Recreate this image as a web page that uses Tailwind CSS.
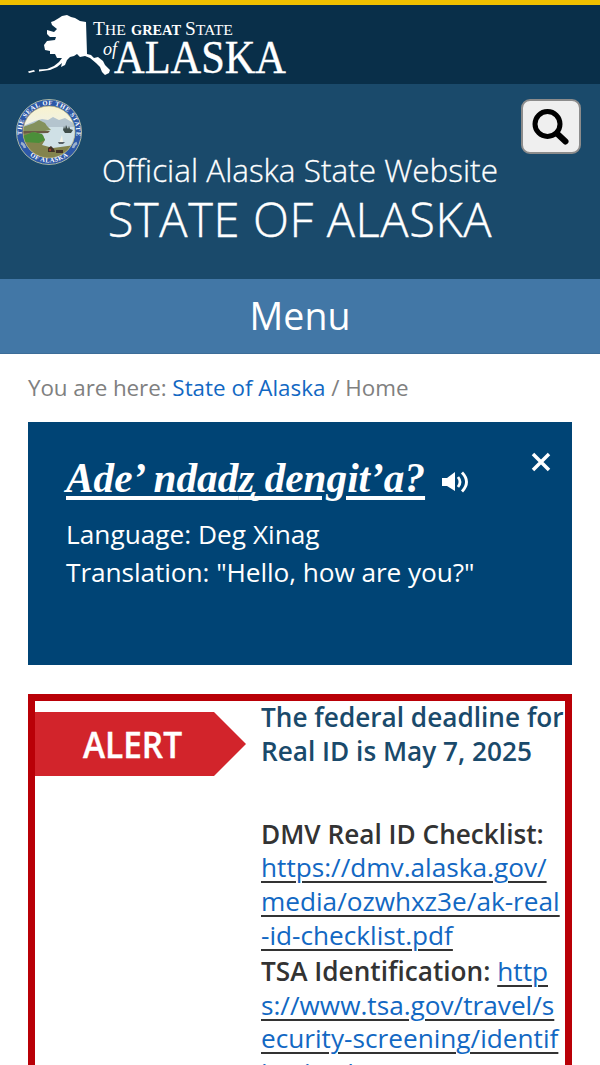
<!DOCTYPE html>
<html lang="en">
<head>
    <meta charset="UTF-8">
    <meta name="viewport" content="width=device-width, initial-scale=1.0">
    <title>State of Alaska</title>
    <script src="https://cdn.jsdelivr.net/npm/@tailwindcss/browser@4"></script>
</head>
<body class="bg-white font-['Open_Sans',sans-serif] h-[1065px] overflow-hidden">

    <!-- top bar -->
    <div class="h-[84px] bg-[#092f49] border-t-[5px] border-[#f0c000]">
        <svg class="block" width="300" height="79" viewBox="0 5 300 79" fill="#fff">
            <path d="M54 21 L59 18 L62 16 L67 15 L71 17 L75 18 L80 21 L86 22 L87 54 L91 55 L94 58 L98 57 L103 61 L105 65 L110 70 L109 73 L105 75 L102 72 L100 67 L96 63 L90 58 L85 56 L80 57 L77 54 L74 56 L70 57 L67 60 L65 65 L61 67 L62 63 L57 67 L50 70 L39 71.500 L39 69.500 L47 69 L54 66 L59 62 L62 58 L57 58 L55 54 L50 54 L50 51 L45 50 L44 45 L47 41 L55 40 L56 37 L50 37 L47 34 L47 30 L54 32 L57 29 L52 25 L51 22 Z"/>
            <path d="M28 71.500 L34 70 L35 71.500 L29 73 Z"/>
            <g font-family="'Liberation Serif', serif">
                <text x="93" y="35" font-size="19" textLength="33" lengthAdjust="spacingAndGlyphs">T<tspan font-size="15.500">HE</tspan></text>
                <text x="131" y="35" font-size="15.500" font-weight="bold" textLength="50" lengthAdjust="spacingAndGlyphs">GREAT</text>
                <text x="185" y="35" font-size="19" textLength="48" lengthAdjust="spacingAndGlyphs">S<tspan font-size="15.500">TATE</tspan></text>
                <text x="103" y="55" font-size="19" font-style="italic" textLength="14" lengthAdjust="spacingAndGlyphs">of</text>
                <text x="114" y="73" font-size="47" stroke="#fff" stroke-width=".4" textLength="172" lengthAdjust="spacingAndGlyphs">ALASKA</text>
            </g>
        </svg>
    </div>

    <!-- header -->
    <header class="relative h-[195px] bg-[#1a4a6b] pt-[70px] text-center text-white font-light">
        <svg class="absolute left-[15px] top-[14px]" width="68" height="68" viewBox="0 0 68 68">
            <defs>
                <clipPath id="inner"><circle cx="34" cy="34" r="26"/></clipPath>
                <linearGradient id="sky" x1="0" y1="0" x2="0" y2="1">
                    <stop offset="0" stop-color="#fbf3c4"/>
                    <stop offset=".5" stop-color="#eef1ee"/>
                </linearGradient>
                <path id="arcTop" d="M7.300 40 A27.300 27.300 0 1 1 60.700 40"/>
                <path id="arcBottom" d="M6 47 A31.300 31.300 0 0 0 62 47"/>
            </defs>
            <circle cx="34" cy="34" r="32.500" fill="#2d58a8" stroke="#a9b7a5" stroke-width="1"/>
            <g clip-path="url(#inner)">
                <rect width="68" height="68" fill="url(#sky)"/>
                <path d="M8 28 L20 23 L27 21 L33 22 L38 19 L44 22 L50 20 L60 26 V32 H8 Z" fill="#b4c4ce"/>
                <path d="M8 29 H60 V52 H8 Z" fill="#cfe0e6"/>
                <path d="M8 29 L19 25 L24 22 L30 25 L32 28 L36 32 L30 33 L8 34 Z" fill="#84915c"/>
                <path d="M8 33 L35 33 L33 35 L8 36 Z" fill="#6a5a46"/>
                <path d="M8 36 L20 34 L28 37 L30 42 L27 47 L38 50 L60 47 V64 H8 Z" fill="#83834d"/>
                <path d="M8 38 L18 34 L27 36 L30 42 L24 45 L9 44 Z" fill="#4b8f3a"/>
                <path d="M48 32 l1-4 1 3 1-4 2 4 1-3 1 3 3 1 -2 3 H50 Z" fill="#3f4d4b"/>
                <path d="M47 37 L44.500 44 H48 Z" fill="#f5f3e8"/>
                <path d="M43 44 H50 L48 46 H44 Z" fill="#596066"/>
                <path d="M33 50 l3-2 3 3 1 3 h-7 Z M41 52 h7 v3 h-7 Z" fill="#413127"/>
                <circle cx="35" cy="52" r="1.200" fill="#a43c29"/>
            </g>
            <circle cx="34" cy="34" r="26" fill="none" stroke="#b3ac76" stroke-width=".7"/>
            <path d="M6 45 q3 1 4 5 M62 45 q-3 1 -4 5" stroke="#9cb0ca" stroke-width="2.500" fill="none"/>
            <g fill="#fff" font-family="'Liberation Serif', serif" font-size="6.500" font-weight="bold">
                <text><textPath href="#arcTop" startOffset="3" textLength="92">THE SEAL OF THE STATE</textPath></text>
                <text><textPath href="#arcBottom" startOffset="14" textLength="41">OF ALASKA</textPath></text>
            </g>
        </svg>
        <button class="absolute left-[521px] top-[15px] w-[60px] h-[55px] bg-[#efefef] border-2 border-[#8c8c8c] rounded-[9px] flex items-center justify-center">
            <svg width="38" height="38" viewBox="0 0 38 38" fill="none" stroke="#000">
                <circle cx="15.500" cy="16" r="12.500" stroke-width="5"/>
                <path d="M25 25.500 L33.500 33.500" stroke-width="6" stroke-linecap="round"/>
            </svg>
        </button>
        <h2 class="text-[31.500px] leading-[32px] whitespace-nowrap [-webkit-text-stroke:0.300px_white]">Official Alaska State Website</h2>
        <h1 class="text-[47px] leading-[66px] tracking-[0.650px] whitespace-nowrap [-webkit-text-stroke:0.400px_white]">STATE OF ALASKA</h1>
    </header>

    <nav class="h-[75px] bg-[#4277a6] border-b border-[#3c6d98] text-center text-white text-[37.500px] leading-[74px]">Menu</nav>

    <main class="px-7">
        <p class="h-[68px] text-[22.400px] leading-[67px] text-[#808080] whitespace-nowrap"><span class="tracking-[-0.070px]">You are here:</span> <a href="#" class="text-[#1268c3]">State of Alaska</a> / Home</p>

        <!-- phrase of the day -->
        <section class="relative h-[243px] bg-[#004475] text-white pl-[38px] pt-[32px]">
            <div class="flex items-center h-[48px]">
                <h3 class="font-['Liberation_Serif',serif] font-bold italic text-[41.250px] leading-[48px] underline decoration-[4px] underline-offset-[4px] whitespace-nowrap">Ade’ ndad<span class="[text-decoration-skip-ink:none]">z̨</span> dengit’a?</h3>
                <svg class="ml-[17px] mt-[7px]" width="28" height="24" viewBox="0 0 28 24" fill="#fff">
                    <path d="M0 8 H5 L13 2 V21 L5 16 H0 Z"/>
                    <path d="M16 7 Q20 12 16 17 M20 2.500 Q29 12 20 21.500" fill="none" stroke="#fff" stroke-width="2.800"/>
                </svg>
            </div>
            <svg class="absolute left-[503px] top-[30px]" width="20" height="20" viewBox="0 0 20 20" stroke="#fff" stroke-width="3.500">
                <path d="M2 2 L18 18 M18 2 L2 18"/>
            </svg>
            <p class="mt-[14px] text-[26.250px] leading-[37.500px] whitespace-nowrap">Language: Deg Xinag<br><span class="tracking-[-0.080px]">Translation: "Hello, how are you?"</span></p>
        </section>

        <!-- alert box -->
        <section class="mt-[29px] h-[420px] border-[7.500px] border-[#b90007] flex">
            <svg class="mt-[11px] shrink-0" width="212" height="65" viewBox="0 0 212 65">
                <path d="M0 0 H179 L211 32 L179 64 H0 Z" fill="#d2242b"/>
                <text x="48" y="46" fill="#fff" font-family="'Open Sans', sans-serif" font-size="36" font-weight="600" textLength="99" lengthAdjust="spacingAndGlyphs" stroke="#fff" stroke-width=".4">ALERT</text>
            </svg>
            <div class="pl-[14px] text-[26.200px] leading-[33.800px] text-[#333] whitespace-nowrap">
                <h4 class="font-semibold text-[#1a4a6b]">The federal deadline for<br>Real ID is May 7, 2025</h4>
                <p class="mt-[49px] font-semibold">DMV Real ID Checklist:</p>
                <p><a href="#" class="text-[#1268c3] underline decoration-[#333] decoration-[2px] underline-offset-[4px]">https://dmv.alaska.gov/<br>media/ozwhxz3e/ak-real<br>-id-checklist.pdf</a></p>
                <p class="pt-[2px]"><b class="font-semibold">TSA Identification:</b> <a href="#" class="text-[#1268c3] underline decoration-[#333] decoration-[2px] underline-offset-[4px]">http<br>s://www.tsa.gov/travel/s<br>ecurity-screening/identif<br>ication/</a></p>
            </div>
        </section>
    </main>

</body>
</html>
